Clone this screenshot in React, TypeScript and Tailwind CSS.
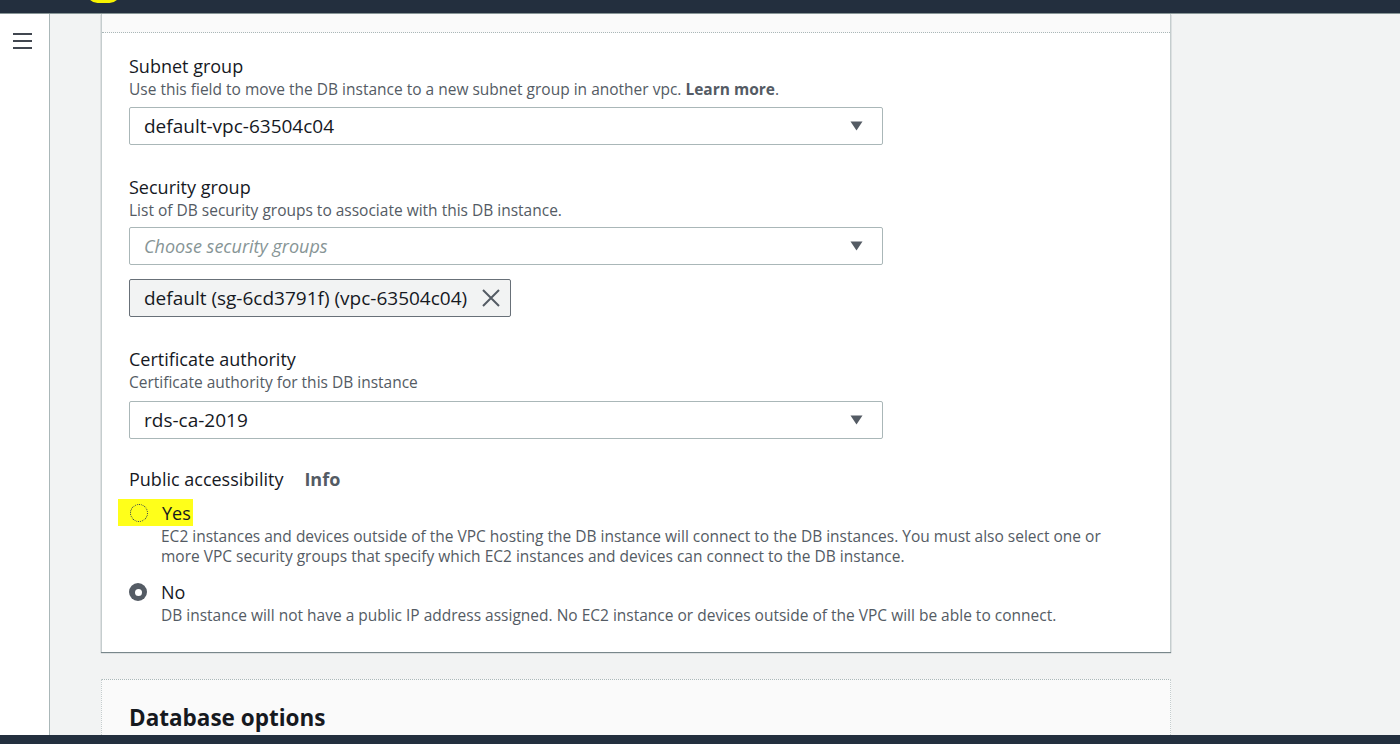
import React from "react";

const font = { fontFamily: '"Open Sans", "Noto Sans", Arial, sans-serif' };

function Caret() {
  return (
    <svg width="13" height="10" viewBox="0 0 13 10" className="shrink-0">
      <path d="M0.5 0.5 L12.5 0.5 L6.5 9.5 Z" fill="#545b64" />
    </svg>
  );
}

function Select({ value, placeholder }: { value?: string; placeholder?: string }) {
  return (
    <div className="w-[754px] h-[38px] border border-[#aab7b8] rounded-[2px] bg-white flex items-center justify-between pl-[14px] pr-[19px]">
      {value ? (
        <span className="text-[19px] text-[#16191f] leading-[22px]">{value}</span>
      ) : (
        <span className="text-[18px] text-[#879596] italic leading-[22px]">{placeholder}</span>
      )}
      <Caret />
    </div>
  );
}

function Label({ children, className = "" }: { children: React.ReactNode; className?: string }) {
  return <div className={"text-[18px] leading-[22px] text-[#16191f] " + className}>{children}</div>;
}

function Desc({ children, className = "" }: { children: React.ReactNode; className?: string }) {
  return <div className={"text-[15.5px] leading-[20px] text-[#545b64] " + className}>{children}</div>;
}

export default function App() {
  return (
    <div className="w-[1400px] h-[744px] flex flex-col overflow-hidden bg-[#f2f3f3]" style={font}>
      <div className="h-[14px] shrink-0 bg-[#232f3e] relative border-b border-[#879596]">
        <div className="absolute left-[87px] top-[-18px] w-[33px] h-[21px] rounded-full bg-[#f7f300]" />
      </div>
      <div className="flex flex-1 min-h-0">
        <aside className="w-[50px] shrink-0 bg-white border-r border-[#aab7b8] pt-[19px] pl-[13px]">
          <div className="flex flex-col gap-[5px] w-[19px]">
            <div className="h-[2px] bg-[#414750]" />
            <div className="h-[2px] bg-[#414750]" />
            <div className="h-[2px] bg-[#414750]" />
          </div>
        </aside>
        <main className="flex-1 min-w-0 pl-[51px]">
          <div className="w-[1070px] flex flex-col">
            <section className="bg-white border-x border-[#c5cdce] shadow-[0_1px_1px_0_rgba(0,28,36,0.5)]">
              <div className="h-[19px] bg-[#fafafa] border-b border-dotted border-[#aab7b8]" />
              <div className="pl-[27px] pt-[22px] pb-[27px]">
                <Label>Subnet group</Label>
                <Desc className="mt-[2px]">
                  Use this field to move the DB instance to a new subnet group in another vpc.{" "}
                  <span className="font-bold text-[#545b64]">Learn more</span>.
                </Desc>
                <div className="mt-[8px]">
                  <Select value="default-vpc-63504c04" />
                </div>

                <Label className="mt-[31px]">Security group</Label>
                <Desc className="mt-[2px]">List of DB security groups to associate with this DB instance.</Desc>
                <div className="mt-[7px]">
                  <Select placeholder="Choose security groups" />
                </div>
                <div className="mt-[14px] flex">
                  <div className="flex items-center h-[38px] border border-[#687078] bg-[#f2f3f3] rounded-[2px] pl-[14px] pr-[9px] gap-[14px]">
                    <span className="text-[19px] leading-[22px] text-[#16191f]">default (sg-6cd3791f) (vpc-63504c04)</span>
                    <svg width="20" height="20" viewBox="0 0 20 20">
                      <path d="M2 2 L18 18 M18 2 L2 18" stroke="#545b64" strokeWidth="2" />
                    </svg>
                  </div>
                </div>

                <Label className="mt-[31px]">Certificate authority</Label>
                <Desc className="mt-[2px]">Certificate authority for this DB instance</Desc>
                <div className="mt-[9px]">
                  <Select value="rds-ca-2019" />
                </div>

                <div className="mt-[29px] flex items-center gap-[21px]">
                  <Label>Public accessibility</Label>
                  <span className="text-[18px] leading-[22px] font-bold text-[#545b64]">Info</span>
                </div>

                <div className="mt-[9px] flex items-center ml-[-11px]">
                  <div className="flex items-center bg-[#ffff1a] h-[27px] pl-[12px] pr-[2px] gap-[14px]">
                    <div className="w-[18px] h-[18px] rounded-full border border-dotted border-[#1a2a5a]" />
                    <span className="text-[18px] leading-[22px] text-[#16191f]">Yes</span>
                  </div>
                </div>
                <Desc className="pl-[32px] mt-0 w-[992px]">
                  EC2 instances and devices outside of the VPC hosting the DB instance will connect to the DB instances. You must also select one or more VPC security groups that specify which EC2 instances and devices can connect to the DB instance.
                </Desc>

                <div className="mt-[15px] flex items-center gap-[14px]">
                  <div className="w-[18px] h-[18px] rounded-full bg-[#545b64] flex items-center justify-center">
                    <div className="w-[7px] h-[7px] rounded-full bg-white" />
                  </div>
                  <span className="text-[18px] leading-[22px] text-[#16191f]">No</span>
                </div>
                <Desc className="pl-[32px] mt-[2px]">
                  DB instance will not have a public IP address assigned. No EC2 instance or devices outside of the VPC will be able to connect.
                </Desc>
              </div>
            </section>

            <section className="mt-[27px] bg-[#fafafa] border-x border-[#c5cdce] border-t border-t-[#aab7b8] border-dotted h-[200px]">
              <div className="pl-[27px] pt-[24px]">
                <div className="text-[22.5px] leading-[28px] font-bold text-[#16191f]">Database options</div>
              </div>
            </section>
          </div>
        </main>
      </div>
      <div className="h-[9px] shrink-0 bg-[#232f3e]" />
    </div>
  );
}
